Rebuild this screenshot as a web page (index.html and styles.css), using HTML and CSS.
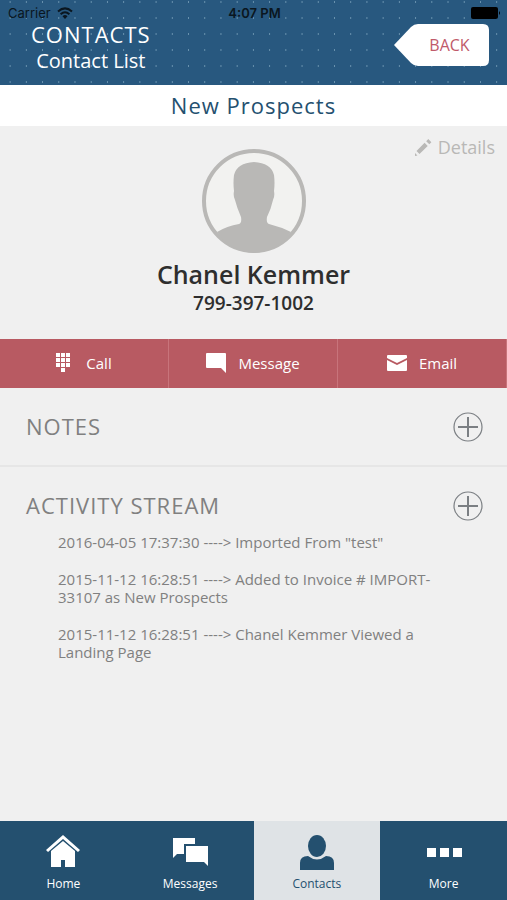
FILE: index.html
```html
<!DOCTYPE html>
<html lang="en">
<head>
<meta charset="utf-8">
<meta name="viewport" content="width=device-width, initial-scale=1">
<title>Contacts</title>
<link rel="stylesheet" href="styles.css">
</head>
<body>
<div class="app">
  <header class="header">
    <div class="status">
      <span class="carrier">Carrier
        <svg width="16" height="12" viewBox="0 0 16 12" fill="none" stroke="currentColor" stroke-width="2" aria-hidden="true"><path d="M1 4.5Q8-1.8 15 4.5M3.6 7.2Q8 3.2 12.4 7.2"/><path d="M5.5 9.2Q8 7 10.5 9.2L8 12Z" fill="currentColor" stroke="none"/></svg>
      </span>
      <span class="clock">4:07 PM</span>
      <svg class="battery" width="30" height="12" viewBox="0 0 30 12" fill="currentColor" aria-hidden="true"><rect width="27" height="12" rx="2"/><path d="M28 4Q30 6 28 8Z"/></svg>
    </div>
    <div class="heading">
      <div class="titles">
        <h1>CONTACTS</h1>
        <p>Contact List</p>
      </div>
      <button class="back" type="button">
        <svg class="back-shape" width="95" height="42" viewBox="0 0 95 42" aria-hidden="true"><path d="M0 21L17 3Q20 0 24 0H89Q95 0 95 6V36Q95 42 89 42H24Q20 42 17 39Z" fill="#fff"/></svg>
        <span>BACK</span>
      </button>
    </div>
  </header>
  <h2 class="group">New Prospects</h2>
  <main class="main">
    <section class="profile">
      <a class="details" href="#details">
        <svg width="18" height="18" viewBox="0 0 18 18" fill="currentColor" aria-hidden="true"><path d="M1 15L3.500 17.500 1 18ZM2.500 13L10.600 4.800 13.700 7.900 5.500 16ZM12.200 3.200L14.300 1.100 17.400 4.200 15.300 6.300Z"/></svg>
        <span>Details</span>
      </a>
      <svg class="avatar" width="104" height="104" viewBox="0 0 104 104" role="img" aria-label="Contact photo"><circle cx="52" cy="52" r="50" fill="#f2f2f0" stroke="#b9b8b6" stroke-width="4"/><path fill="#b9b8b6" d="M15 83Q25 77 37 75Q40 74 39 68Q35 59 33 51Q31 47 32 42Q31 34 32 26Q35 14 52 13Q69 14 72 26Q73 34 72 42Q73 47 71 51Q69 60 65 68Q64 74 67 75Q79 78 89 83Q76 102 52 104Q28 102 15 83Z"/></svg>
      <h3>Chanel Kemmer</h3>
      <p class="phone">799-397-1002</p>
    </section>
    <nav class="actions" aria-label="Contact actions">
      <button type="button">
        <svg class="keypad" width="14" height="20" viewBox="0 0 14 20" fill="currentColor" aria-hidden="true"><path d="M0 0h4v4H0zM5 0h4v4H5zM10 0h4v4h-4zM0 5h4v4H0zM5 5h4v4H5zM10 5h4v4h-4zM0 10h4v4H0zM5 10h4v4H5zM10 10h4v4h-4zM5 15h4v4H5z"/></svg>
        Call
      </button>
      <button type="button">
        <svg width="20" height="20" viewBox="0 0 20 20" fill="currentColor" aria-hidden="true"><path d="M1 0H19Q20 0 20 1V20L15 15H1Q0 15 0 14V1Q0 0 1 0Z"/></svg>
        Message
      </button>
      <button type="button">
        <svg width="20" height="16" viewBox="0 0 20 16" fill="currentColor" aria-hidden="true"><path d="M0 1Q0 0 1 0H19Q20 0 20 1V3L10 8 0 3ZM0 5L10 10 20 5V15Q20 16 19 16H1Q0 16 0 15Z"/></svg>
        Email
      </button>
    </nav>
    <section class="panel">
      <div class="panel-head">
        <h2>NOTES</h2>
        <button type="button" aria-label="Add note"><svg width="30" height="30" viewBox="0 0 30 30" fill="none" stroke="#7b7f83" aria-hidden="true"><circle cx="15" cy="15" r="14" stroke-width="1.200"/><path d="M15 5V25M5 15H25" stroke-width="2"/></svg></button>
      </div>
    </section>
    <section class="panel">
      <div class="panel-head">
        <h2>ACTIVITY STREAM</h2>
        <button type="button" aria-label="Add activity"><svg width="30" height="30" viewBox="0 0 30 30" fill="none" stroke="#7b7f83" aria-hidden="true"><circle cx="15" cy="15" r="14" stroke-width="1.200"/><path d="M15 5V25M5 15H25" stroke-width="2"/></svg></button>
      </div>
      <ul class="stream">
        <li>2016-04-05 17:37:30 ----&gt; Imported From "test"</li>
        <li>2015-11-12 16:28:51 ----&gt; Added to Invoice # IMPORT-33107 as New Prospects</li>
        <li>2015-11-12 16:28:51 ----&gt; Chanel Kemmer Viewed a Landing Page</li>
      </ul>
    </section>
  </main>
  <nav class="tabs" aria-label="Main">
    <a href="#home">
      <svg width="36" height="36" viewBox="0 0 36 36" fill="currentColor" aria-hidden="true"><path d="M18 0L35 15 33 17 18 4 3 17 1 15ZM18 6L30 16V32H20V25H16V32H6V16Z"/></svg>
      Home
    </a>
    <a href="#messages">
      <svg width="36" height="36" viewBox="0 0 36 36" fill="currentColor" aria-hidden="true"><path d="M1 3H23V9H12V19H5L1 23ZM14 11H36V31L32 27H14Z"/></svg>
      Messages
    </a>
    <a class="active" href="#contacts" aria-current="page">
      <svg width="36" height="36" viewBox="0 0 36 36" fill="currentColor" aria-hidden="true"><ellipse cx="18" cy="11" rx="9" ry="11"/><path d="M1 35V28Q1 21 9 21Q18 28 27 21Q35 21 35 28V35Z"/></svg>
      Contacts
    </a>
    <a href="#more">
      <svg width="36" height="36" viewBox="0 0 36 36" fill="currentColor" aria-hidden="true"><path d="M1 13h9v9H1zM14 13h9v9h-9zM27 13h9v9h-9z"/></svg>
      More
    </a>
  </nav>
</div>
</body>
</html>
```
FILE: styles.css
```css
* { box-sizing: border-box; }

body {
  margin: 0;
  background: #f0f0f0;
  color: #808080;
  font-family: "Open Sans", "Noto Sans", sans-serif;
}

h1, h2, h3, p, ul { margin: 0; padding: 0; font-weight: 400; }
button { margin: 0; padding: 0; border: 0; background: none; font: inherit; color: inherit; cursor: pointer; }
a { color: inherit; text-decoration: none; }
svg { display: block; flex: none; }

.app { display: flex; flex-direction: column; min-height: 100vh; }

.header {
  padding-bottom: 12px;
  background: radial-gradient(circle, #6a93af 0, #6a93af 1px, transparent 1px) 2px 10px / 3.2% 16px, #28587f;
  color: #fff;
}

.status {
  display: grid;
  grid-template-columns: 1fr auto 1fr;
  align-items: center;
  height: 20px;
  padding: 6px 6px 0 8px;
  color: #0a1620;
  font: 13px/14px Inter, "Liberation Sans", sans-serif;
}
.carrier { display: flex; align-items: center; gap: 6px; }
.clock { font-weight: 600; }
.battery { justify-self: end; color: #000; }

.heading { display: flex; justify-content: space-between; align-items: flex-start; padding: 0 18px 0 31px; }
.titles { text-align: center; }
.titles h1 { font-size: 22px; line-height: 28px; letter-spacing: 1px; }
.titles p { font-size: 20px; line-height: 25px; }

.back { display: grid; place-items: center; margin-top: 4px; color: #c05a6a; font-size: 16px; }
.back > * { grid-area: 1 / 1; }
.back span { padding-left: 16px; }

.group {
  background: #fff;
  color: #24506f;
  font-size: 22px;
  line-height: 41px;
  letter-spacing: 1px;
  text-align: center;
}

.main { flex: 1; }

.profile {
  display: flex;
  flex-direction: column;
  align-items: center;
  padding: 8px 12px 23px;
  color: #2e2e2e;
}
.details { display: flex; align-items: center; gap: 6px; align-self: flex-end; color: #b9b8b6; font-size: 18px; line-height: 26px; }
.avatar { margin-top: -11px; }
.profile h3 { margin-top: 4px; font-size: 25px; font-weight: 600; line-height: 34px; }
.phone { font-size: 19px; font-weight: 600; line-height: 25px; }

.actions { display: grid; grid-template-columns: repeat(3, 1fr); background: #b85a62; color: #fff; }
.actions button {
  display: flex;
  align-items: center;
  justify-content: center;
  gap: 12px;
  height: 49px;
  padding-bottom: 1px;
  border-right: 1px solid #c8747b;
  font-size: 15px;
}
.keypad { margin-right: 4px; }

.panel + .panel { border-top: 2px solid #e6e6e6; }
.panel-head { display: flex; align-items: center; justify-content: space-between; height: 77px; padding: 0 24px 0 26px; }
.panel-head h2 { padding-bottom: 2px; font-size: 22px; letter-spacing: 1px; }

.stream { padding: 0 70px 18px 58px; margin-top: -11px; list-style: none; font-size: 15px; line-height: 18px; }
.stream li + li { margin-top: 19px; }

.tabs { display: grid; grid-template-columns: repeat(4, 1fr); background: #24506f; color: #fff; }
.tabs a {
  display: flex;
  flex-direction: column;
  align-items: center;
  gap: 4px;
  height: 79px;
  padding-top: 14px;
  font-size: 12px;
  line-height: 18px;
}
.tabs .active { background: #dfe3e6; color: #24506f; }
```
